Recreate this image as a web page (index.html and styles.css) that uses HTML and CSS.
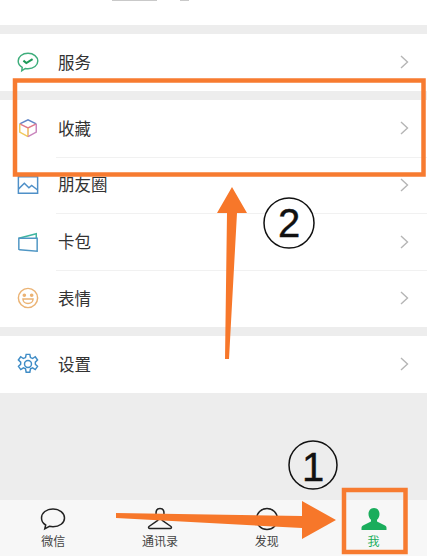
FILE: index.html
```html
<!DOCTYPE html>
<html lang="zh-CN">
<head>
  <meta charset="UTF-8" />
  <meta name="viewport" content="width=device-width, initial-scale=1.0"/>
  <title>我</title>
  <link rel="stylesheet" href="styles.css">
</head>
<body>
  <div class="phone">
    <!-- Bottom edge of the profile header -->
    <div class="profile">
      <span class="profile-name"></span>
      <span class="profile-code"></span>
    </div>

    <div class="group">
      <div class="row">
        <svg class="row-icon" viewBox="0 0 24 24" fill="none">
          <path d="M12 2.500C5.900 2.500 1.300 6.200 1.300 11c0 3 1.700 5.300 4.400 6.900l-.5 3.600 3.900-2.500c1 .2 1.900.3 2.900.3 6.100 0 10.700-3.600 10.700-8.300S18.100 2.500 12 2.500z" stroke="#3fae7c" stroke-width="1.600"/>
          <path d="M7 10.500l3.200 2.700 6.800-4.400" stroke="#1f9a58" stroke-width="2.200"/>
        </svg>
        <span class="row-title">服务</span>
        <svg class="chevron" viewBox="0 0 9 14" fill="none"><path d="M1 1l6.500 6L1 13" stroke="#b5b5b5" stroke-width="1.400"/></svg>
      </div>
    </div>

    <div class="group">
      <div class="row">
        <svg class="row-icon" viewBox="0 0 24 24" fill="none" stroke-width="1.600">
          <path d="M3 7.500L12 3l9 4.500" stroke="#5f84c6"/>
          <path d="M3 7.500l9 4.500 9-4.500" stroke="#e07a8a"/>
          <path d="M3 7.500v9L12 21.500" stroke="#f2c95c"/>
          <path d="M12 12v9.500" stroke="#eeb45a"/>
          <path d="M21 7.500v9l-9 5" stroke="#c985bd"/>
        </svg>
        <span class="row-title">收藏</span>
        <svg class="chevron" viewBox="0 0 9 14" fill="none"><path d="M1 1l6.500 6L1 13" stroke="#b5b5b5" stroke-width="1.400"/></svg>
      </div>
      <div class="row">
        <svg class="row-icon" viewBox="0 0 24 24" fill="none" stroke="#4f90c8" stroke-width="1.600">
          <path d="M1.500 3h21v18h-21z"/>
          <path d="M1.500 16.500L8 10l5 5 3-2.500 6.500 5"/>
        </svg>
        <span class="row-title">朋友圈</span>
        <svg class="chevron" viewBox="0 0 9 14" fill="none"><path d="M1 1l6.500 6L1 13" stroke="#b5b5b5" stroke-width="1.400"/></svg>
      </div>
      <div class="row">
        <svg class="row-icon" viewBox="0 0 24 24" fill="none" stroke-width="1.600">
          <path d="M2 8l19-5v5" stroke="#3fb5a0"/>
          <path d="M2 8h20v14L3 20.500 2 20z" stroke="#4f96c4"/>
        </svg>
        <span class="row-title">卡包</span>
        <svg class="chevron" viewBox="0 0 9 14" fill="none"><path d="M1 1l6.500 6L1 13" stroke="#b5b5b5" stroke-width="1.400"/></svg>
      </div>
      <div class="row">
        <svg class="row-icon" viewBox="0 0 24 24" fill="none" stroke="#ebb374" stroke-width="1.600">
          <circle cx="12" cy="12" r="10.500"/>
          <circle cx="8" cy="9" r="1.200" fill="#ebb374"/>
          <circle cx="16" cy="9" r="1.200" fill="#ebb374"/>
          <path d="M6.500 13h11c0 3-2.400 5-5.500 5s-5.500-2-5.500-5z"/>
        </svg>
        <span class="row-title">表情</span>
        <svg class="chevron" viewBox="0 0 9 14" fill="none"><path d="M1 1l6.500 6L1 13" stroke="#b5b5b5" stroke-width="1.400"/></svg>
      </div>
    </div>

    <div class="group">
      <div class="row">
        <svg class="row-icon" viewBox="0 0 24 24" fill="none" stroke="#3f8cc6" stroke-width="1.600">
          <circle cx="12" cy="12" r="3.800"/>
          <path d="M10 1.500h4l.7 3.500 2.300 1 2.900-1.900 2.500 3.500-2.400 2.400v2.200l2.400 2.400-2.500 3.500-2.900-1.900-2.300 1-.7 3.800h-4l-.7-3.800-2.300-1-2.900 1.900-2.500-3.500 2.400-2.400v-2.200L1.500 7.600 4 4.100 6.900 6l2.400-1z"/>
        </svg>
        <span class="row-title">设置</span>
        <svg class="chevron" viewBox="0 0 9 14" fill="none"><path d="M1 1l6.500 6L1 13" stroke="#b5b5b5" stroke-width="1.400"/></svg>
      </div>
    </div>

    <div class="spacer"></div>

    <div class="tabbar">
      <div class="tab">
        <svg class="tab-icon" viewBox="0 0 26 24" fill="none" stroke="#222" stroke-width="1.500">
          <path d="M13 2C6.500 2 1.500 5.700 1.500 11c0 3 1.600 5.500 4.200 7l-.9 3.800 4.600-2.500c1.200.3 2.400.4 3.600.4 6.500 0 11.500-3.700 11.500-8.700S19.500 2 13 2z"/>
        </svg>
        <span>微信</span>
      </div>
      <div class="tab">
        <svg class="tab-icon" viewBox="0 0 26 24" fill="none" stroke="#222" stroke-width="1.500">
          <path d="M13 1.500c-2.500 0-4 2-4 4.700 0 2.100.7 3.800 1.800 4.900v2.200L2 19.500c-.8.700-.4 2 .8 2h20.400c1.200 0 1.600-1.300.8-2l-8.800-6.200v-2.200c1.100-1.100 1.800-2.800 1.800-4.900 0-2.700-1.500-4.700-4-4.700z"/>
        </svg>
        <span>通讯录</span>
      </div>
      <div class="tab">
        <svg class="tab-icon" viewBox="0 0 26 24" fill="none" stroke="#222" stroke-width="1.500">
          <circle cx="13" cy="12" r="10.500"/>
        </svg>
        <span>发现</span>
      </div>
      <div class="tab tab-active">
        <svg class="tab-icon" viewBox="0 0 26 24" fill="#1aad5c">
          <path d="M13 1c-3.500 0-5.500 2.700-5.500 6 0 2.500 1 4.500 2.500 5.700v1.800L2 18.500c-1 .6-1.500 1.500-1.500 2.500v2h25v-2c0-1-.5-1.900-1.500-2.500l-8-4v-1.800c1.500-1.200 2.500-3.200 2.500-5.700 0-3.300-2-6-5.500-6z"/>
        </svg>
        <span>我</span>
      </div>
    </div>

    <!-- Annotations drawn over the screenshot -->
    <svg class="marks" viewBox="0 0 427 556" fill="none">
      <rect x="15" y="80.500" width="408.500" height="94" stroke="#f77b30" stroke-width="4.500"/>
      <rect x="344" y="490" width="61.500" height="62" stroke="#f77b30" stroke-width="4.500"/>
      <path d="M232 187l15 26h-10l-8 146h-4l2-146h-10z" fill="#f7772a"/>
      <path d="M116 513l186 3v-15l34 19-34 19v-11l-186-10z" fill="#f7772a"/>
      <circle cx="289" cy="223" r="25" stroke="#111" stroke-width="1.500" fill="#fff"/>
      <text class="mark-num" x="289" y="237">2</text>
      <circle cx="313" cy="465" r="24" stroke="#111" stroke-width="1.500"/>
      <text class="mark-num" x="313" y="481">1</text>
    </svg>
  </div>
</body>
</html>
```

FILE: styles.css
```css
body {
  margin: 0;
  padding: 0;
  font-family: "Liberation Sans", "Noto Sans CJK SC", sans-serif;
  background-color: #ededed;
}

.phone {
  position: relative;
  width: 427px;
  height: 556px;
  overflow: hidden;
  display: flex;
  flex-direction: column;
  background-color: #ededed;
}

/* Top of the page, mostly cut off */
.profile {
  height: 25px;
  flex-shrink: 0;
  display: flex;
  align-items: flex-start;
  gap: 23px;
  padding-left: 112px;
  background: #fff;
}

.profile-name {
  width: 45px;
  height: 1px;
  background: #c9c9c9;
}

.profile-code {
  width: 9px;
  height: 1px;
  background: #c9c9c9;
}

.group {
  margin-top: 9px;
  background: #fff;
}

.row {
  height: 56.75px;
  display: flex;
  align-items: center;
  padding: 0 18px 0 17px;
  position: relative;
}

.row + .row::before {
  content: "";
  position: absolute;
  top: 0;
  left: 56px;
  right: 0;
  height: 1px;
  background: #f1f1f1;
}

.row-icon {
  width: 22px;
  height: 22px;
  flex-shrink: 0;
}

.row-title {
  flex: 1;
  margin-left: 19px;
  padding-bottom: 1px;
  font-size: 16.5px;
  color: #333;
}

.chevron {
  width: 9px;
  height: 14px;
}

.spacer {
  flex: 1;
}

/* Bottom tabs */
.tabbar {
  height: 56px;
  flex-shrink: 0;
  display: grid;
  grid-template-columns: repeat(4, 1fr);
  background: #f7f7f7;
}

.tab {
  display: flex;
  flex-direction: column;
  align-items: center;
  padding-top: 7px;
  font-size: 12px;
  color: #444;
}

.tab span {
  margin-top: 3px;
  line-height: 16px;
}

.tab-icon {
  width: 26px;
  height: 24px;
}

.tab-active {
  color: #1aad5c;
}

.marks {
  position: absolute;
  top: 0;
  left: 0;
  width: 427px;
  height: 556px;
}

.mark-num {
  font-family: "Liberation Sans", sans-serif;
  font-size: 40px;
  fill: #111;
  stroke: #111;
  stroke-width: 0.4;
  text-anchor: middle;
}
```
